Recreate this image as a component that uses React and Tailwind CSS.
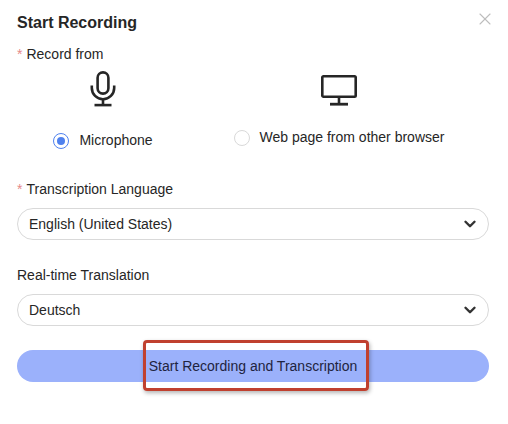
import React from 'react';
import { ChevronDown, X } from 'lucide-react';

function MicIcon() {
  return (
    <svg width="28" height="36" viewBox="0 0 28 36" fill="none" stroke="#262626" strokeWidth="2.6">
      <rect x="8.6" y="1.4" width="10.8" height="21.2" rx="5.4" />
      <path d="M2.8 14.5v2.5a11.2 11.2 0 0 0 22.4 0v-2.5" />
      <path d="M14 28.2v5.5" />
      <path d="M5.5 34.1h17" strokeWidth="2.6" />
    </svg>
  );
}

function MonitorIcon() {
  return (
    <svg width="36" height="31" viewBox="0 0 36 31" fill="none" stroke="#262626">
      <rect x="1.3" y="1.3" width="33.4" height="20.4" rx="1.2" strokeWidth="2.6" />
      <path d="M18 22v7" strokeWidth="2.6" />
      <path d="M9 29.2h18" strokeWidth="2.8" />
    </svg>
  );
}

function Field({ label, required, value }) {
  return (
    <div>
      <div className="h-[20px] leading-[20px] text-[14px] text-[#262626]">
        {required && <span className="text-[#e58a8a] mr-[4px]">*</span>}
        {label}
      </div>
      <div className="mt-[9px] h-[32px] rounded-full border border-[#d9d9d9] flex items-center justify-between pl-[11px] pr-[9px] text-[14px] text-[#262626]">
        <span>{value}</span>
        <ChevronDown size={18} strokeWidth={3.2} color="#333333" />
      </div>
    </div>
  );
}

export default function App() {
  return (
    <div className="relative w-[508px] h-[424px] bg-white font-['Liberation_Sans',Arial,sans-serif] overflow-hidden">
      <div className="pl-[17px] pr-[19px] pt-[13px]">
        <div className="flex justify-between items-start">
          <h2 className="text-[16px] leading-[20px] font-bold text-[#262626]">Start Recording</h2>
          <button className="text-[#bdbdbd] -mr-[6px] -mt-[4px]">
            <X size={20} strokeWidth={1.3} />
          </button>
        </div>

        <div className="mt-[11px] h-[20px] leading-[20px] text-[14px] text-[#262626]">
          <span className="text-[#e58a8a] mr-[4px]">*</span>
          Record from
        </div>

        <div className="flex mt-[6px] h-[102px]">
          <div className="w-[170px] flex flex-col items-center pl-[2px] pt-[1px]">
            <MicIcon />
            <div className="flex items-center mt-[23px] text-[14px] text-[#262626]">
              <span className="w-[16px] h-[16px] rounded-full border border-[#4f81ee] flex items-center justify-center">
                <span className="w-[8px] h-[8px] rounded-full bg-[#4f81ee]" />
              </span>
              <span className="ml-[10px]">Microphone</span>
            </div>
          </div>
          <div className="flex-1 flex flex-col items-center pl-[2px] pt-[5px]">
            <MonitorIcon />
            <div className="flex items-center mt-[21px] text-[14px] text-[#262626]">
              <span className="w-[16px] h-[16px] rounded-full border border-[#d9d9d9]" />
              <span className="ml-[10px]">Web page from other browser</span>
            </div>
          </div>
        </div>

        <div className="mt-[7px]">
          <Field label="Transcription Language" required value="English (United States)" />
        </div>
        <div className="mt-[25px]">
          <Field label="Real-time Translation" value="Deutsch" />
        </div>

        <button className="mt-[24px] w-full h-[32px] rounded-full bg-[#9bb1fb] text-[14px] text-[#1f2440]">
          Start Recording and Transcription
        </button>
      </div>

      {/* annotation box drawn over the button */}
      <div className="absolute left-[143px] top-[340px] w-[226px] h-[51px] rounded-[4px] border-[3px] border-[#c0402f] shadow-[1px_2px_4px_rgba(0,0,0,0.3)]" />
    </div>
  );
}
